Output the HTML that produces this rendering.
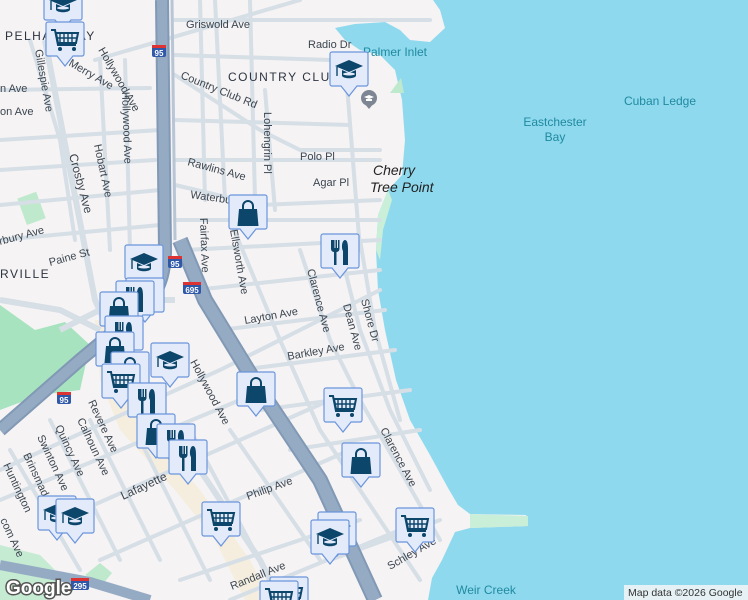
<!DOCTYPE html>
<html><head><meta charset="utf-8"><style>
html,body{margin:0;padding:0;width:748px;height:600px;overflow:hidden;background:#f5f3f4;}
svg{display:block;font-family:"Liberation Sans",sans-serif;}
.r{stroke:#d6dee6;stroke-width:4;fill:none;stroke-linecap:round}
.r2{stroke:#d6dee6;stroke-width:6;fill:none}
.t{font-size:11px;fill:#3c4650}
</style></head><body>
<svg width="748" height="600" viewBox="0 0 748 600">
<defs>
<g id="box">
<path d="M2 0 h34 a2 2 0 0 1 2 2 v30 a2 2 0 0 1 -2 2 h-9 l-8 10 l-8 -10 h-9 a2 2 0 0 1 -2 -2 v-30 a2 2 0 0 1 2 -2z" fill="#e3ebfb" stroke="#6b95dc" stroke-width="1.2"/>
</g>
<g id="bag"><use href="#box"/><path d="M10 14 h18 l1.5 17 h-21 z" fill="#0d466b"/><path d="M14 15 v-4 a5 5 0 0 1 10 0 v4" stroke="#0d466b" stroke-width="2" fill="none"/></g>
<g id="fork"><use href="#box"/><path d="M10 6 v9 a3 3 0 0 0 3 3 v13 h2.5 v-13 a3 3 0 0 0 3-3 v-9 h-1.5 v8 h-1 v-8 h-1.5 v8 h-1 v-8 z" fill="#0d466b"/><path d="M22 31 v-14 c-2 -3 -1 -11 2 -11 c2 0 3 3 3 9 v16z" fill="#0d466b"/></g>
<g id="cart"><use href="#box"/><path d="M5 8 h4 l3 15 h18" stroke="#0d466b" stroke-width="2" fill="none"/><path d="M10 11 h22 l-2 10 h-18 z" fill="none" stroke="#0d466b" stroke-width="2"/><path d="M14 11 v10 M18 11 v10 M22 11 v10 M26 11 v10 M11 16 h20" stroke="#0d466b" stroke-width="1.4"/><circle cx="14" cy="27" r="2" fill="#0d466b"/><circle cx="28" cy="27" r="2" fill="#0d466b"/></g>
<g id="cap"><use href="#box"/><path d="M19 8 l14 6 l-14 6 l-14 -6 z" fill="#0d466b"/><path d="M12 18 v6 c2 3 12 3 14 0 v-6 l-7 3z" fill="#0d466b"/><ellipse cx="19" cy="22" rx="6" ry="1.5" fill="#e3ebfb"/><path d="M7 15 v9" stroke="#0d466b" stroke-width="1.4"/></g>
</defs>

<!-- park areas -->
<path d="M0 305 L35 330 L65 322 L90 345 L80 390 L40 395 L0 410Z" fill="#a8e3bf"/>
<path d="M0 545 L40 555 L60 575 L50 600 L0 600Z" fill="#c6ebd3"/>
<rect x="22" y="195" width="20" height="28" fill="#bfe9cc" transform="rotate(-20 30 210)"/>
<path d="M85 575 l15 -12 l12 10 l-10 12z" fill="#bfe9cc"/>
<!-- commercial tan strip -->
<path d="M95 320 L120 320 L140 420 L200 490 L250 560 L270 600 L245 600 L215 540 L175 490 L120 430 L100 380Z" fill="#f5ecd8" opacity="0.8"/>

<!-- water -->
<path d="M433 0 L748 0 L748 600 L428 600 L432 578 L442 560 L455 532 L470 528 L528 526 L526 515 L470 514 L458 505 L448 488 L430 455 L410 420 L396 380 L385 330 L378 290 L376 250 L378 215 L388 190 L402 175 L405 140 L402 100 L395 70 L380 55 L360 50 L345 40 L335 28 L355 24 L385 22 L400 30 L410 40 L430 42 L445 28 L440 10Z" fill="#8fd9ee"/>
<path d="M376 250 L378 215 L388 190 L392 200 L383 230 L380 260Z" fill="#c9efd9"/>
<path d="M470 514 L528 516 L528 526 L470 528Z" fill="#c9efd9"/>
<path d="M390 93 l14 0 l-3 -15z" fill="#bfe9cc"/>

<!-- local roads -->
<g class="r">
<path d="M0 140 L160 130"/><path d="M0 90 L150 88"/><path d="M0 170 L155 160"/>
<path d="M0 205 L160 190"/><path d="M0 240 L160 225"/>
<path d="M30 40 L60 140 L75 240"/><path d="M100 60 L110 250"/><path d="M125 60 L130 250"/>
<path d="M95 60 L300 0"/><path d="M175 20 L430 20"/><path d="M175 55 L330 60"/>
<path d="M175 75 L260 130 L300 150 L380 150"/><path d="M175 120 L350 125"/>
<path d="M175 160 L380 160"/><path d="M175 185 L260 205 L380 200"/>
<path d="M175 220 L380 220"/><path d="M200 0 L205 200"/><path d="M215 0 L225 200"/>
<path d="M250 0 L255 200"/><path d="M265 90 L275 210"/><path d="M345 60 L360 250"/>
<path d="M185 250 L380 240"/><path d="M195 290 L380 270"/><path d="M220 330 L385 310"/>
<path d="M240 370 L395 350"/><path d="M260 410 L410 390"/><path d="M290 450 L420 430"/>
<path d="M230 220 L280 340 L320 430 L360 490 L420 580"/>
<path d="M300 250 L330 340 L360 400 L400 470 L440 540"/>
<path d="M340 250 L360 330 L390 410 L430 490"/><path d="M360 240 L375 330 L400 420"/>
<path d="M0 470 L220 370 L380 290"/><path d="M0 500 L240 400"/>
<path d="M60 520 L330 400"/><path d="M100 560 L350 450"/><path d="M180 580 L360 520"/>
<path d="M230 600 L400 530"/><path d="M330 560 L440 520"/>
<path d="M50 420 L120 560"/><path d="M90 420 L160 560"/><path d="M140 440 L210 580"/>
<path d="M190 430 L270 580"/><path d="M230 430 L320 560"/><path d="M10 450 L80 570"/>
</g>
<path d="M45 40 L95 300 L150 420 L200 470 L260 560 L280 600" class="r2"/>
<path d="M0 300 L60 310 L100 330" class="r2"/>
<path d="M60 330 L120 300 L175 300" class="r2"/>

<!-- highways -->
<path d="M162 0 L165 250 Q165 290 140 310 L80 360 L0 430" stroke="#8199b5" stroke-width="14" fill="none"/>
<path d="M162 0 L165 250 Q165 290 140 310 L80 360 L0 430" stroke="#95aac3" stroke-width="10" fill="none"/>
<path d="M180 240 L205 300 L260 390 L320 480 L375 600" stroke="#8199b5" stroke-width="16" fill="none"/>
<path d="M180 240 L205 300 L260 390 L320 480 L375 600" stroke="#95aac3" stroke-width="12" fill="none"/>
<path d="M0 565 L90 582 L150 600" stroke="#95aac3" stroke-width="10" fill="none"/>
<path d="M172 0 L175 240" stroke="#b7c5d5" stroke-width="3"/>

<!-- shields -->
<g font-size="8" font-weight="bold" fill="#fff" text-anchor="middle">
<rect x="152" y="45" width="14" height="12" rx="2" fill="#2f58a8"/><rect x="152" y="45" width="14" height="3" fill="#d33"/><text x="159" y="56">95</text>
<rect x="168" y="256" width="14" height="12" rx="2" fill="#2f58a8"/><rect x="168" y="256" width="14" height="3" fill="#d33"/><text x="175" y="267">95</text>
<rect x="183" y="282" width="18" height="12" rx="2" fill="#2f58a8"/><rect x="183" y="282" width="18" height="3" fill="#d33"/><text x="192" y="293">695</text>
<rect x="57" y="392" width="14" height="12" rx="2" fill="#2f58a8"/><rect x="57" y="392" width="14" height="3" fill="#d33"/><text x="64" y="403">95</text>
<rect x="71" y="578" width="18" height="12" rx="2" fill="#2f58a8"/><rect x="71" y="578" width="18" height="3" fill="#d33"/><text x="80" y="589">295</text>
</g>

<!-- labels -->
<g class="t">
<text x="186" y="28">Griswold Ave</text>
<text x="308" y="48">Radio Dr</text>
<text x="180" y="78" transform="rotate(22 180 78)">Country Club Rd</text>
<text x="300" y="160">Polo Pl</text>
<text x="313" y="186">Agar Pl</text>
<text x="187" y="165" transform="rotate(15 187 165)">Rawlins Ave</text>
<text x="190" y="198" transform="rotate(8 190 198)">Waterbu</text>
<text x="245" y="324" transform="rotate(-10 245 324)">Layton Ave</text>
<text x="288" y="360" transform="rotate(-10 288 360)">Barkley Ave</text>
<text x="248" y="500" transform="rotate(-20 248 500)">Philip Ave</text>
<text x="232" y="590" transform="rotate(-22 232 590)">Randall Ave</text>
<text x="390" y="570" transform="rotate(-30 390 570)">Schley Ave</text>
<text x="123" y="500" transform="rotate(-25 123 500)" font-size="12">Lafayette</text>
<text x="50" y="266" transform="rotate(-15 50 266)">Paine St</text>
<text x="0" y="245" transform="rotate(-15 0 245)">rbury Ave</text>
<text x="0" y="92">n Ave</text>
<text x="0" y="115">on Ave</text>
<text x="35" y="50" transform="rotate(80 35 50)">Gillespie Ave</text>
<text x="69" y="155" transform="rotate(75 69 155)" font-size="12">Crosby Ave</text>
<text x="94" y="145" transform="rotate(78 94 145)">Hobart Ave</text>
<text x="122" y="92" transform="rotate(88 122 92)">Hollywood Ave</text>
<text x="98" y="50" transform="rotate(60 98 50)">Hollywood Ave</text>
<text x="68" y="65" transform="rotate(30 68 65)">Merry Ave</text>
<text x="264" y="112" transform="rotate(90 264 112)">Lohengrin Pl</text>
<text x="200" y="218" transform="rotate(88 200 218)">Fairfax Ave</text>
<text x="230" y="230" transform="rotate(80 230 230)">Ellsworth Ave</text>
<text x="307" y="270" transform="rotate(75 307 270)">Clarence Ave</text>
<text x="343" y="305" transform="rotate(75 343 305)">Dean Ave</text>
<text x="361" y="300" transform="rotate(75 361 300)">Shore Dr</text>
<text x="380" y="430" transform="rotate(62 380 430)">Clarence Ave</text>
<text x="190" y="362" transform="rotate(62 190 362)">Hollywood Ave</text>
<text x="88" y="402" transform="rotate(65 88 402)">Revere Ave</text>
<text x="77" y="420" transform="rotate(65 77 420)">Calhoun Ave</text>
<text x="55" y="427" transform="rotate(65 55 427)">Quincy Ave</text>
<text x="37" y="437" transform="rotate(65 37 437)">Swinton Ave</text>
<text x="23" y="455" transform="rotate(65 23 455)">Brinsmade</text>
<text x="3" y="465" transform="rotate(65 3 465)">Huntington</text>
<text x="0" y="520" transform="rotate(65 0 520)">com Ave</text>
</g>
<g font-size="12" fill="#2c3440" letter-spacing="1.5">
<text x="5" y="40">PELHAM BAY</text>
<text x="228" y="81">COUNTRY CLUB</text>
<text x="0" y="278">RVILLE</text>
</g>
<g font-size="14" font-style="italic" fill="#222">
<text x="373" y="175">Cherry</text><text x="370" y="192">Tree Point</text>
</g>
<g font-size="12" fill="#1f8aa0" text-anchor="middle">
<text x="395" y="56">Palmer Inlet</text>
<text x="660" y="105">Cuban Ledge</text>
<text x="555" y="126">Eastchester</text><text x="555" y="141">Bay</text>
<text x="486" y="594">Weir Creek</text>
</g>
<circle cx="369" cy="98" r="8" fill="#7d8692"/><path d="M364 103 l5 6 l5 -6z" fill="#7d8692"/><path d="M364 97 l5 -2 l5 2 l-5 2z M366 99 v2 h6 v-2" fill="#fff"/>

<!-- markers -->
<use href="#cap" x="44" y="-14"/>
<use href="#cart" x="46" y="22"/>
<use href="#cap" x="330" y="52"/>
<use href="#bag" x="229" y="195"/>
<use href="#fork" x="321" y="234"/>
<use href="#cap" x="125" y="245"/>
<use href="#fork" x="126" y="278"/>
<use href="#fork" x="116" y="281"/>
<use href="#bag" x="100" y="292"/>
<use href="#fork" x="105" y="316"/>
<use href="#bag" x="96" y="332"/>
<use href="#cap" x="151" y="343"/>
<use href="#bag" x="111" y="352"/>
<use href="#cart" x="102" y="364"/>
<use href="#fork" x="128" y="383"/>
<use href="#bag" x="237" y="372"/>
<use href="#cart" x="324" y="388"/>
<use href="#bag" x="137" y="414"/>
<use href="#fork" x="157" y="424"/>
<use href="#fork" x="169" y="440"/>
<use href="#bag" x="342" y="443"/>
<use href="#cap" x="38" y="496"/>
<use href="#cap" x="56" y="499"/>
<use href="#cart" x="202" y="502"/>
<use href="#cart" x="396" y="508"/>
<use href="#cap" x="318" y="512"/>
<use href="#cap" x="311" y="520"/>
<use href="#cart" x="270" y="577"/>
<use href="#cart" x="260" y="581"/>

<text x="6" y="594" font-size="19" font-weight="bold" fill="#fff" stroke="#555" stroke-width="3" paint-order="stroke">Google</text>
<rect x="624" y="585" width="124" height="15" fill="#f5f5f5" opacity="0.85"/>
<text x="628" y="596" font-size="10.5" fill="#333">Map data ©2026 Google</text>
</svg>
</body></html>
